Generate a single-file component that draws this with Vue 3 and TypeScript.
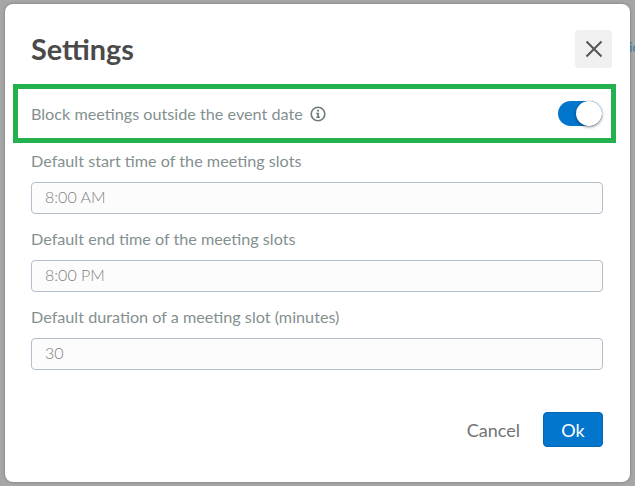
<script setup lang="ts">
interface Field {
  label: string;
  value: string;
}

const fields: Field[] = [
  { label: 'Default start time of the meeting slots', value: '8:00 AM' },
  { label: 'Default end time of the meeting slots', value: '8:00 PM' },
  { label: 'Default duration of a meeting slot (minutes)', value: '30' },
];
</script>

<template>
  <div class="backdrop">
    <span class="behind">ic</span>
    <div class="dialog">
      <header class="dialog-header">
        <h1 class="title">Settings</h1>
        <button class="close" aria-label="Close">
          <svg width="18" height="18" viewBox="0 0 18 18">
            <path d="M1.5 1.5 L16.5 16.5 M16.5 1.5 L1.5 16.5" stroke="#555" stroke-width="2" fill="none" />
          </svg>
        </button>
      </header>

      <div class="toggle-row">
        <span class="label">Block meetings outside the event date</span>
        <svg class="info" width="16" height="16" viewBox="0 0 16 16">
          <circle cx="8" cy="8" r="6.8" stroke="#6f7b7b" stroke-width="1.6" fill="none" />
          <rect x="7.1" y="3.7" width="1.9" height="1.9" fill="#6f7b7b" />
          <path d="M6.2 6.8 H9 V10.8 H10 V12.1 H6.2 V10.8 H7.2 V8.1 H6.2 Z" fill="#6f7b7b" />
        </svg>
        <span class="switch"><span class="knob"></span></span>
      </div>

      <div class="fields">
        <div v-for="field in fields" :key="field.label" class="field">
          <label class="label">{{ field.label }}</label>
          <div class="input">{{ field.value }}</div>
        </div>
      </div>

      <footer class="actions">
        <button class="cancel">Cancel</button>
        <button class="ok">Ok</button>
      </footer>
    </div>
  </div>
</template>

<style scoped>
.backdrop {
  position: relative;
  box-sizing: border-box;
  width: 635px;
  height: 486px;
  padding: 4px 5px;
  background: #a6a6a6;
  overflow: hidden;
  font-family: Lato, sans-serif;
}
.behind {
  position: absolute;
  left: 629px;
  top: 38px;
  font-size: 14px;
  color: #3f7fa8;
}
.dialog {
  position: relative;
  box-sizing: border-box;
  height: 478px;
  padding: 26px 8px 0;
  background: #fff;
  border-radius: 8px;
  box-shadow: 0 0 3px rgba(0, 0, 0, 0.3);
}
.dialog-header {
  display: flex;
  justify-content: space-between;
  align-items: center;
  height: 38px;
  padding: 0 10px 0 18px;
  margin-bottom: 16px;
}
.title {
  margin: 0;
  font-size: 28.8px;
  font-weight: 700;
  color: #4a4a4a;
}
.close {
  display: flex;
  align-items: center;
  justify-content: center;
  width: 37px;
  height: 38px;
  padding: 0;
  border: none;
  border-radius: 4px;
  background: #f0f0f0;
}
.toggle-row {
  box-sizing: border-box;
  display: flex;
  align-items: center;
  width: 603px;
  height: 59px;
  padding: 0 9px 0 13px;
  border: 5px solid #22b14c;
}
.label {
  font-size: 16.2px;
  line-height: 18px;
  color: #84908f;
}
.info {
  margin-left: 7px;
}
.switch {
  position: relative;
  margin-left: auto;
  width: 44px;
  height: 25px;
  border-radius: 13px;
  background: #0275cc;
}
.knob {
  position: absolute;
  top: 0;
  right: 0;
  width: 26px;
  height: 25px;
  border-radius: 50%;
  background: #fff;
  box-shadow: 0 1px 3px rgba(0, 0, 0, 0.5);
}
.fields {
  display: flex;
  flex-direction: column;
  gap: 16px;
  padding: 9px 19px 0 18px;
}
.field {
  display: flex;
  flex-direction: column;
  gap: 12px;
}
.input {
  box-sizing: border-box;
  height: 32px;
  padding: 0 13px;
  border: 1px solid #b4bec8;
  border-radius: 4px;
  background: #fcfcfc;
  font-size: 16px;
  font-weight: 300;
  line-height: 28px;
  color: #808080;
}
.actions {
  display: flex;
  justify-content: flex-end;
  align-items: center;
  gap: 23px;
  padding: 42px 19px 0;
}
.cancel {
  padding: 0;
  border: none;
  background: none;
  font: 400 18px Lato, sans-serif;
  color: #727272;
}
.ok {
  width: 60px;
  height: 35px;
  padding: 0;
  border: 1px solid #0268b6;
  border-radius: 4px;
  background: #0275cc;
  font: 400 18px Lato, sans-serif;
  color: #fff;
}
</style>
